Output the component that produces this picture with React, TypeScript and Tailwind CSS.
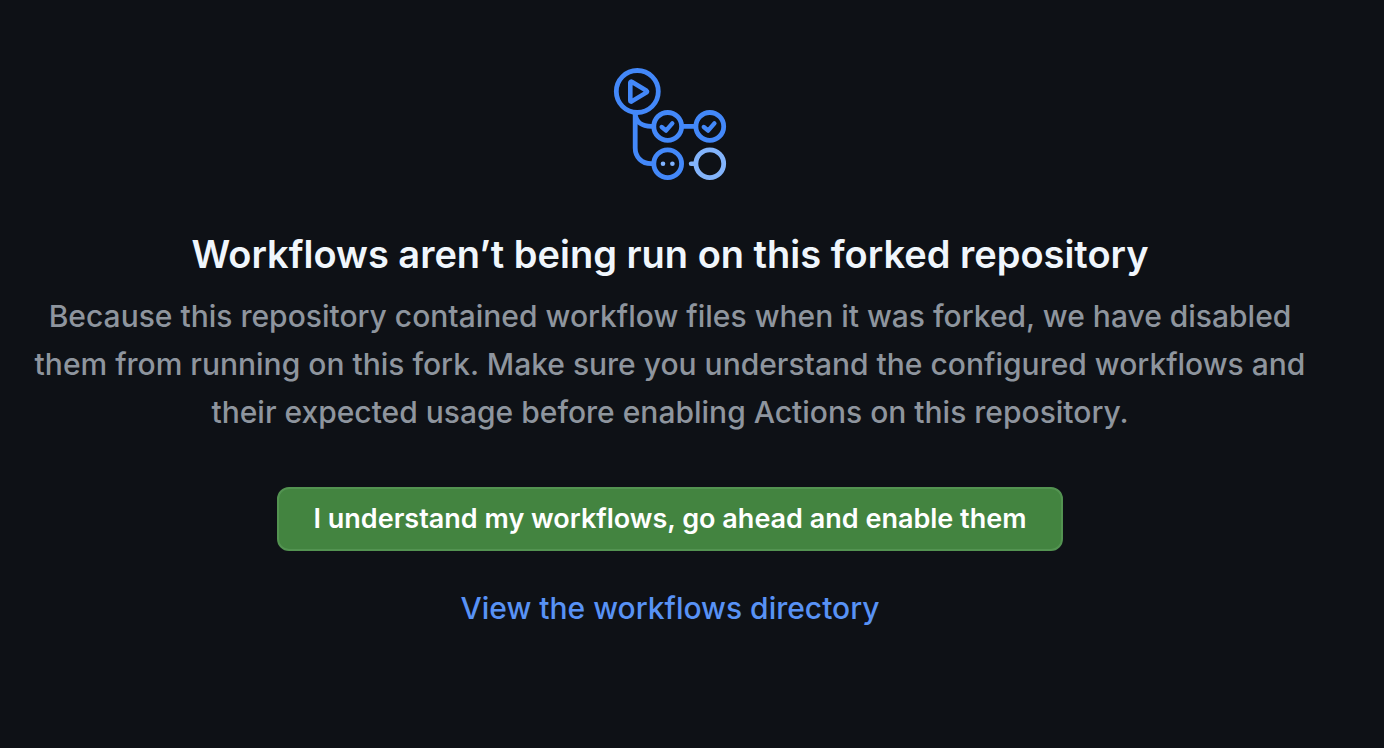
export default function App() {
  return (
    <main className="flex min-h-screen flex-col items-center bg-[#0e1116] pt-[66px] pr-15 pl-4 text-center font-['Inter','Liberation_Sans',sans-serif]">
      <svg width="116" height="116" viewBox="612 66 116 116" fill="none" stroke="#4388f9" strokeWidth="4.800" strokeLinecap="round" strokeLinejoin="round" aria-hidden="true">
        <circle cx="637.300" cy="91.500" r="21" />
        <path d="M630.300 82.500v18.200c0 .7.8 1.100 1.400.7l14.900-9c.6-.4.6-1.200 0-1.600l-14.900-9c-.6-.4-1.400 0-1.400.7z" strokeWidth="4.600" />
        <path d="M635.200 114v34c0 9 6.500 15.700 16 15.700h2M635.200 114c.8 8 6.500 12.400 16 12.400h2M682 126.400h13" strokeLinecap="butt" />
        <circle cx="667.700" cy="126.400" r="13.900" />
        <circle cx="709.800" cy="126.400" r="13.900" />
        <circle cx="667.700" cy="163.700" r="13.900" />
        <path d="M661.700 127l4.300 3.600 6.300-7.200M703.800 127l4.300 3.600 6.300-7.200" strokeWidth="4.400" />
        <g fill="#80b3ff" stroke="none">
          <circle cx="663" cy="163.700" r="2.300" />
          <circle cx="672.400" cy="163.700" r="2.300" />
        </g>
        <g stroke="#83b4fb">
          <circle cx="709.800" cy="163.700" r="13.900" />
          <path d="M691 163.700h4" strokeWidth="4.400" />
        </g>
      </svg>
      <h1 className="mt-[42px] text-[38px] leading-[60px] font-semibold text-[#f0f6fc]">Workflows aren’t being run on this forked repository</h1>
      <p className="mt-2 max-w-[1300px] text-[30px] leading-[48px] font-medium text-[#8e959e]">Because this repository contained workflow files when it was forked, we have disabled them from running on this fork. Make sure you understand the configured workflows and their expected usage before enabling Actions on this repository.</p>
      <button type="button" className="mt-[51px] h-16 rounded-xl border-2 border-[#539351] bg-[#438440] px-[34px] text-[27px] font-semibold text-white">I understand my workflows, go ahead and enable them</button>
      <a href="#workflows" className="mt-[33px] text-[30px] leading-[48px] font-medium text-[#5892f5]">View the workflows directory</a>
    </main>
  );
}
